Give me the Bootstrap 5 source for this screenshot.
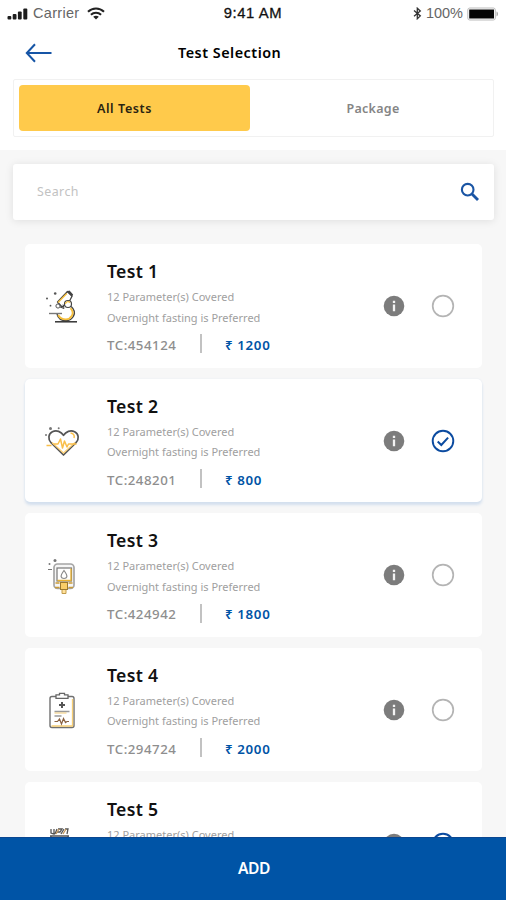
<!DOCTYPE html>
<html lang="en">
<head>
<meta charset="utf-8">
<meta name="viewport" content="width=device-width, initial-scale=1">
<title>Test Selection</title>
<link href="https://cdn.jsdelivr.net/npm/bootstrap@5.3.0/dist/css/bootstrap.min.css" rel="stylesheet">
<style>
:root{--brand:#0054a6}
body{font-family:"Noto Sans","Open Sans",sans-serif;background:#f7f7f7;color:#111;white-space:nowrap}
.screen{height:900px}
.top-area{height:150px}
.status{height:27px;padding:0 7px;font-family:"Liberation Sans",sans-serif;font-size:14.5px;color:#666}
.status>div{flex:1 1 0}
.status .carrier{letter-spacing:.3px}
.status .clock{color:#111;font-size:14.8px;-webkit-text-stroke:.3px #111;letter-spacing:.6px}
.titlebar{height:51px;padding:0 25px}
.titlebar h1{font-size:14.4px;font-weight:600;letter-spacing:.5px;margin-left:126px}
.switch{margin:1px 12px 0 13px;height:58px;padding:5px;border:1px solid #f1f1f1;border-radius:2px}
.switch .btn{border:0;border-radius:4px;padding:2px 0 0 8px;font-size:12.5px;font-weight:600;color:#858585;letter-spacing:.3px;flex:1 1 0}
.switch .btn.active{background:#ffca4b;color:#2a2412;flex:0 0 231px;padding:2px 20px 0 0;letter-spacing:.6px}
.searchbox{height:56px;margin:14px 12px 0 13px;padding:0 13px 0 24px;border-radius:3px;box-shadow:0 1px 9px rgba(0,0,0,.1);font-size:12.4px;color:#c2c2c2;letter-spacing:.45px}
.tests{margin:24px 24px 0 25px;gap:11px;min-height:0}
.test{height:123.6px;flex:none;border-radius:5px;padding:15px 27.5px 0 19px}
.test.chosen{box-shadow:0 3px 3px #d3dfee,0 0 2px #e3eaf2}
.pic{width:38px;height:38px;margin:28px 25px 0 0}
.pic.high{margin-top:26px}
.test h2{font-size:17.6px;font-weight:600;line-height:25px;letter-spacing:.3px;margin-bottom:3px}
.info{font-size:11px;line-height:20.7px;color:#a0a0a0}
.codes{font-size:13.3px;font-weight:500;line-height:24px;color:#8e8e8e;margin-top:4.5px;letter-spacing:.5px}
.codes .code{width:92.5px}
.codes .bar{width:2px;height:19px;background:#c2c2c2;margin-top:-2px}
.codes .price{color:var(--brand);font-weight:600;margin-left:23.5px;letter-spacing:.65px}
.marks{gap:26px;margin-top:35px}
.add{height:63px;background:var(--brand)!important;font-size:15.6px;font-weight:600;letter-spacing:-.4px;padding-left:14px;border-top:1px solid #0a4791}
svg{display:block;flex:none}
</style>
<script src="https://cdn.jsdelivr.net/npm/bootstrap@5.3.0/dist/js/bootstrap.bundle.min.js"></script>
</head>
<body>
<svg width="0" height="0" class="position-absolute" aria-hidden="true">
  <symbol id="i-info" viewBox="0 0 22 22"><circle cx="11" cy="11" r="10.3" fill="#7c7c7c"/><path d="M11 5.8v2.3M11 9.6v6.6" stroke="#f3f3f3" stroke-width="2.3"/></symbol>
  <symbol id="i-off" viewBox="0 0 24 24"><circle cx="12" cy="12" r="10.3" fill="none" stroke="#b4b4b4" stroke-width="1.7"/></symbol>
  <symbol id="i-on" viewBox="0 0 24 24"><circle cx="12" cy="12" r="10.3" fill="none" stroke="#0b4ba0" stroke-width="1.9"/><path d="m6.7 12.5 3.6 3.5 6.8-7.4" fill="none" stroke="#0b4ba0" stroke-width="2"/></symbol>
</svg>
<div class="screen d-flex flex-column overflow-hidden">
  <header class="top-area bg-white flex-shrink-0">
    <div class="status d-flex align-items-center">
      <div class="d-flex align-items-center">
        <svg width="22" height="12" viewBox="0 0 22 12" fill="#1d1d1d"><rect x=".5" y="8" width="3.8" height="3.5" rx="1"/><rect x="5.7" y="6" width="3.8" height="5.5" rx="1"/><rect x="10.9" y="3.5" width="3.8" height="8" rx="1"/><rect x="16.3" y=".5" width="4" height="11" rx="1"/></svg>
        <span class="carrier ms-1">Carrier</span>
        <svg class="ms-2" width="18" height="13" viewBox="0 0 18 13" fill="none" stroke="#222" stroke-width="2"><path d="M1 4.8c4.5-4.5 11.5-4.5 16 0M3.9 7.8c2.9-2.8 7.3-2.8 10.2 0"/><path d="M6.2 9.7c1.6-1.4 4-1.4 5.6 0L9 12.5z" fill="#222" stroke="none"/></svg>
      </div>
      <span class="clock">9:41 AM</span>
      <div class="d-flex align-items-center justify-content-end">
        <svg width="9" height="13" viewBox="0 0 9 13" fill="none" stroke="#333" stroke-width="1.3"><path d="m1 3.6 6.3 5.3-3 2.9V1.2l3 2.8L1 9.2"/></svg>
        <span class="ms-1">100%</span>
        <svg class="ms-1" width="32" height="14" viewBox="0 0 32 14"><rect x=".8" y="1" width="27.5" height="12" rx="2" fill="#fff" stroke="#bbb"/><rect x="2.2" y="2.5" width="24.8" height="9" fill="#050505"/><path d="M29.5 4.6c2 .6 2 4.2 0 4.8z" fill="#aaa"/></svg>
      </div>
    </div>
    <div class="titlebar d-flex align-items-center">
      <svg width="27" height="20" viewBox="0 0 27 20" fill="none" stroke="#1655a6" stroke-width="2"><path d="M26.5 10H2M10 1.2 1.8 10 10 18.8"/></svg>
      <h1 class="mb-0 text-black">Test Selection</h1>
    </div>
    <div class="switch d-flex">
      <button class="btn active" type="button">All Tests</button>
      <button class="btn" type="button">Package</button>
    </div>
  </header>

  <div class="searchbox bg-white d-flex align-items-center justify-content-between flex-shrink-0">
    <span>Search</span>
    <svg width="22" height="22" viewBox="0 0 22 22" fill="none" stroke="#1a55a4"><circle cx="8.7" cy="8.7" r="5.8" stroke-width="2.1"/><path d="m13 13 6 6" stroke-width="2.8"/></svg>
  </div>

  <main class="tests d-flex flex-column flex-fill">
    <article class="test bg-white d-flex align-items-start">
      <svg class="pic high" viewBox="0 0 38 38" fill="none" stroke-linejoin="round">
        <path d="m13.5 17 10-10.5 4.5 4.7-3 5.8-7 5z" fill="#fff" stroke="#444" stroke-width="1.3"/><path d="m14 17.5 8.8-9" stroke="#f6bf3c" stroke-width="1.4"/><path d="m22.5 6.5 3-1 3.6 4-1 2z" fill="#444"/>
        <circle cx="24" cy="19" r="3.5" fill="#fff" stroke="#444" stroke-width="1.2"/><path d="M21.5 19a2.5 2.5 0 0 1 4.5-1.4" stroke="#f6bf3c" stroke-width="1.2"/>
        <path d="M27.2 21.5c7 6.5 1 14.2-5.2 14.2-5 0-8-3-9-6.7" stroke="#444" stroke-width="1.4"/><path d="M26.5 23.2c5 5.5.2 11-4.5 11.2-4 0-6.5-2-7.8-4.4" stroke="#f6bf3c" stroke-width="1.8"/>
        <circle cx="14" cy="21" r="2.1" stroke="#555"/><path d="m16 22 4 1.5-1-4" stroke="#444"/><path d="M5 28.5h13" stroke="#777" stroke-width="1.4"/><path d="M11 36.8h22" stroke="#333" stroke-width="1.5"/>
        <g fill="#555"><circle cx="3" cy="13.5" r="1"/><circle cx="11.2" cy="8.5" r="1.3"/><circle cx="6.5" cy="20.7" r=".9"/></g>
      </svg>
      <div class="flex-fill">
        <h2>Test 1</h2><div class="info">12 Parameter(s) Covered</div><div class="info">Overnight fasting is Preferred</div>
        <div class="codes d-flex align-items-center"><span class="code">TC:454124</span><span class="bar"></span><span class="price">₹ 1200</span></div>
      </div>
      <div class="marks d-flex align-items-center"><svg width="22" height="22"><use href="#i-info"/></svg><svg width="24" height="24"><use href="#i-off"/></svg></div>
    </article>

    <article class="test chosen bg-white d-flex align-items-start">
      <svg class="pic high" viewBox="0 0 38 38" fill="none" stroke-linejoin="round">
        <path d="M19.5 35 7 22.7C3.8 19.2 4.2 14 8.4 11.8c4.2-2.2 8.8 0 11.1 3.5 2.3-3.5 7-5.7 11.1-3.5 4.2 2.2 4.8 7.4 1.4 10.900z" stroke="#555" stroke-width="1.7"/>
        <path d="M8 22.5 19.5 33 31 22.500" stroke="#ffd276" stroke-width="1.3"/><path d="M2.5 25.500h5m2-1.500h4.500l2.500-5 2 9 2-7 2.500 6 1.500-3h8m-6-11c3 .2 4.300 2.600 3.500 5" stroke="#f9bf4a" stroke-width="1.5"/>
        <g fill="#777"><circle cx="6.500" cy="8.500" r="1.500"/><circle cx="14.700" cy="8.300" r="1"/><circle cx="2" cy="15" r="1"/></g>
      </svg>
      <div class="flex-fill">
        <h2>Test 2</h2><div class="info">12 Parameter(s) Covered</div><div class="info">Overnight fasting is Preferred</div>
        <div class="codes d-flex align-items-center"><span class="code">TC:248201</span><span class="bar"></span><span class="price">₹ 800</span></div>
      </div>
      <div class="marks d-flex align-items-center"><svg width="22" height="22"><use href="#i-info"/></svg><svg width="24" height="24"><use href="#i-on"/></svg></div>
    </article>

    <article class="test bg-white d-flex align-items-start">
      <svg class="pic" viewBox="0 0 38 38" fill="none">
        <rect x="10" y="8" width="20" height="24.5" rx="3.5" fill="#f6f6f6" stroke="#a5a5a5" stroke-width="1.7"/><rect x="13" y="12" width="14.5" height="13" fill="#fff" stroke="#777" stroke-width="1.2"/><path d="M13.5 24.5h13.5V12.5" stroke="#ebb331" stroke-width="1.3"/>
        <path d="M20 14.5c-5 6.5-2.5 8 0 8s5-1.5 0-8z" stroke="#888" stroke-width="1.2"/><path d="M11.5 27h4m9 0h4M11 31.5h4.5m9 0H29" stroke="#c99b38" stroke-width="1.3"/>
        <rect x="16.5" y="26.5" width="7" height="7" fill="#f9ce68" stroke="#9b7930"/><path d="M18 34v3.5h4V34" fill="#ffe19b" stroke="#c29c4b"/>
        <g fill="#777"><circle cx="11" cy="4.5" r="1.5"/><circle cx="5.5" cy="8" r="1"/><path d="M4 13h4v1H4z"/></g>
      </svg>
      <div class="flex-fill">
        <h2>Test 3</h2><div class="info">12 Parameter(s) Covered</div><div class="info">Overnight fasting is Preferred</div>
        <div class="codes d-flex align-items-center"><span class="code">TC:424942</span><span class="bar"></span><span class="price">₹ 1800</span></div>
      </div>
      <div class="marks d-flex align-items-center"><svg width="22" height="22"><use href="#i-info"/></svg><svg width="24" height="24"><use href="#i-off"/></svg></div>
    </article>

    <article class="test bg-white d-flex align-items-start">
      <svg class="pic" viewBox="0 0 38 38" fill="none">
        <rect x="6" y="5.5" width="24" height="31" rx="2" fill="#fff" stroke="#707070" stroke-width="1.4"/><path d="M7.5 35h21V8" stroke="#f8cf75" stroke-width="1.3"/>
        <path d="M12 7.3V3.8h3.5V2.300h5v1.500H24v3.500z" fill="#fff" stroke="#666" stroke-width="1.3"/><path d="M18 11v6m-3-3h6" stroke="#555" stroke-width="2"/>
        <path d="M10.5 20.5h15m-15 4.500h7" stroke="#999" stroke-width="1.3"/><path d="M10.5 22h12" stroke="#f4cc77"/><path d="M10.500 30.500h3l2-2.500 2 5 2-5.500 2 4 1.500-1h2" stroke="#8b6241" stroke-width="1.2"/>
      </svg>
      <div class="flex-fill">
        <h2>Test 4</h2><div class="info">12 Parameter(s) Covered</div><div class="info">Overnight fasting is Preferred</div>
        <div class="codes d-flex align-items-center"><span class="code">TC:294724</span><span class="bar"></span><span class="price">₹ 2000</span></div>
      </div>
      <div class="marks d-flex align-items-center"><svg width="22" height="22"><use href="#i-info"/></svg><svg width="24" height="24"><use href="#i-off"/></svg></div>
    </article>

    <article class="test bg-white d-flex align-items-start">
      <svg class="pic" viewBox="0 0 38 38" fill="none" stroke="#555" stroke-width="1.3">
        <path d="M7 4v4l3 1V4m3 0-2 5m3-5h4l-2 3h-3m7-3-3 5m4-5h3l-1 5M6 11h19M7 11v20h17V11"/><path d="m12 9 3-5m4 5 3-5" stroke="#c49a60"/>
      </svg>
      <div class="flex-fill">
        <h2>Test 5</h2><div class="info">12 Parameter(s) Covered</div>
      </div>
      <div class="marks d-flex align-items-center"><svg width="22" height="22"><use href="#i-info"/></svg><svg width="24" height="24"><use href="#i-on"/></svg></div>
    </article>
  </main>
  <button type="button" class="add btn rounded-0 border-start-0 border-end-0 border-bottom-0 text-white flex-shrink-0 position-relative z-1">ADD</button>
</div>
</body>
</html>
